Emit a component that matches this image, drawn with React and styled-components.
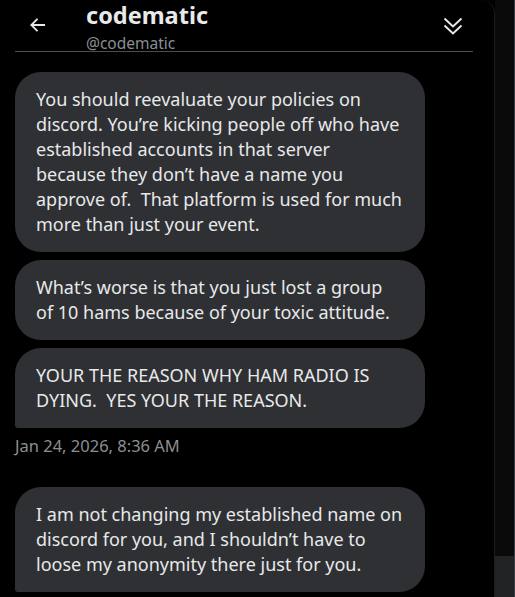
import React from "react";
import styled, { createGlobalStyle } from "styled-components";

const Global = createGlobalStyle`
  html, body { margin: 0; padding: 0; background: #000; }
  body { font-family: "Noto Sans", "Open Sans", sans-serif; color: #e7e9ea; overflow: hidden; }
`;

const Page = styled.div`
  display: flex;
  width: 515px;
  height: 597px;
  background: #000;
  overflow: hidden;
`;

const Main = styled.div`
  width: 494px;
  height: 597px;
  border-right: 1px solid #1c1d1f;
  border-top-right-radius: 14px;
  overflow: hidden;
  display: flex;
  flex-direction: column;
`;

const ScrollTrack = styled.div`
  width: 19px;
  background: #0a0a0a;
  display: flex;
  flex-direction: column;
  justify-content: flex-end;
  border-right: 1px solid #3b4045;
`;

const ScrollThumb = styled.div`
  height: 41px;
  background: #222325;
`;

const Header = styled.div`
  display: flex;
  align-items: flex-start;
  height: 51px;
  margin: 0 21px 0 15px;
  border-bottom: 1px solid #4a4d51;
`;

const IconButton = styled.div`
  width: ${(p) => p.$w}px;
  display: flex;
  align-items: center;
  justify-content: center;
  color: #e7e9ea;
  margin-top: ${(p) => p.$mt || 0}px;
`;

const Titles = styled.div`
  flex: 1;
  display: flex;
  flex-direction: column;
  margin-left: 25px;
  margin-top: 0px;
`;

const Name = styled.div`
  font-size: 23.5px;
  font-weight: 700;
  line-height: 30px;
  color: #e7e9ea;
`;

const Handle = styled.div`
  font-size: 15.5px;
  line-height: 20px;
  color: #8b8f93;
  margin-top: 3px;
`;

const Messages = styled.div`
  display: flex;
  flex-direction: column;
  padding: 20px 0 0 15px;
`;

const Group = styled.div`
  display: flex;
  flex-direction: column;
  gap: 8px;
`;

const Bubble = styled.div`
  width: 410px;
  box-sizing: border-box;
  background: #2f3033;
  border-radius: 26px;
  border-bottom-left-radius: ${(p) => (p.$tail ? "3px" : "26px")};
  padding: 15px 21px;
  font-size: 18px;
  line-height: 25px;
  color: #e7e9ea;
`;

const Time = styled.div`
  font-size: 16.5px;
  line-height: 20px;
  color: #8b8f93;
  margin-top: 8px;
`;

const Spacer = styled.div`
  height: 31px;
`;

const BackArrow = () => (
  <svg width="20" height="20" viewBox="0 0 20 20" fill="none" stroke="currentColor" strokeWidth="1.8">
    <path d="M17 10H3.5M9.5 3.8L3.3 10l6.2 6.2" />
  </svg>
);

const DoubleChevron = () => (
  <svg width="22" height="22" viewBox="0 0 22 22" fill="none" stroke="currentColor" strokeWidth="1.9">
    <path d="M2.5 3.5L11 11.5l8.5-8M2.5 10.5L11 18.5l8.5-8" />
  </svg>
);

export default function App() {
  return (
    <>
      <Global />
      <Page>
        <Main>
          <Header>
            <IconButton $w={46} $mt={15}>
              <BackArrow />
            </IconButton>
            <Titles>
              <Name>codematic</Name>
              <Handle>@codematic</Handle>
            </Titles>
            <IconButton $w={40} $mt={15}>
              <DoubleChevron />
            </IconButton>
          </Header>
          <Messages>
            <Group>
              <Bubble>
                You should reevaluate your policies on<br />
                discord. You’re kicking people off who have<br />
                established accounts in that server<br />
                because they don’t have a name you<br />
                approve of.&nbsp; That platform is used for much<br />
                more than just your event.
              </Bubble>
              <Bubble>
                What’s worse is that you just lost a group<br />
                of 10 hams because of your toxic attitude.
              </Bubble>
              <Bubble $tail>
                YOUR THE REASON WHY HAM RADIO IS<br />
                DYING.&nbsp; YES YOUR THE REASON.
              </Bubble>
            </Group>
            <Time>Jan 24, 2026, 8:36 AM</Time>
            <Spacer />
            <Bubble $tail>
              I am not changing my established name on<br />
              discord for you, and I shouldn’t have to<br />
              loose my anonymity there just for you.
            </Bubble>
          </Messages>
        </Main>
        <ScrollTrack>
          <ScrollThumb />
        </ScrollTrack>
      </Page>
    </>
  );
}
